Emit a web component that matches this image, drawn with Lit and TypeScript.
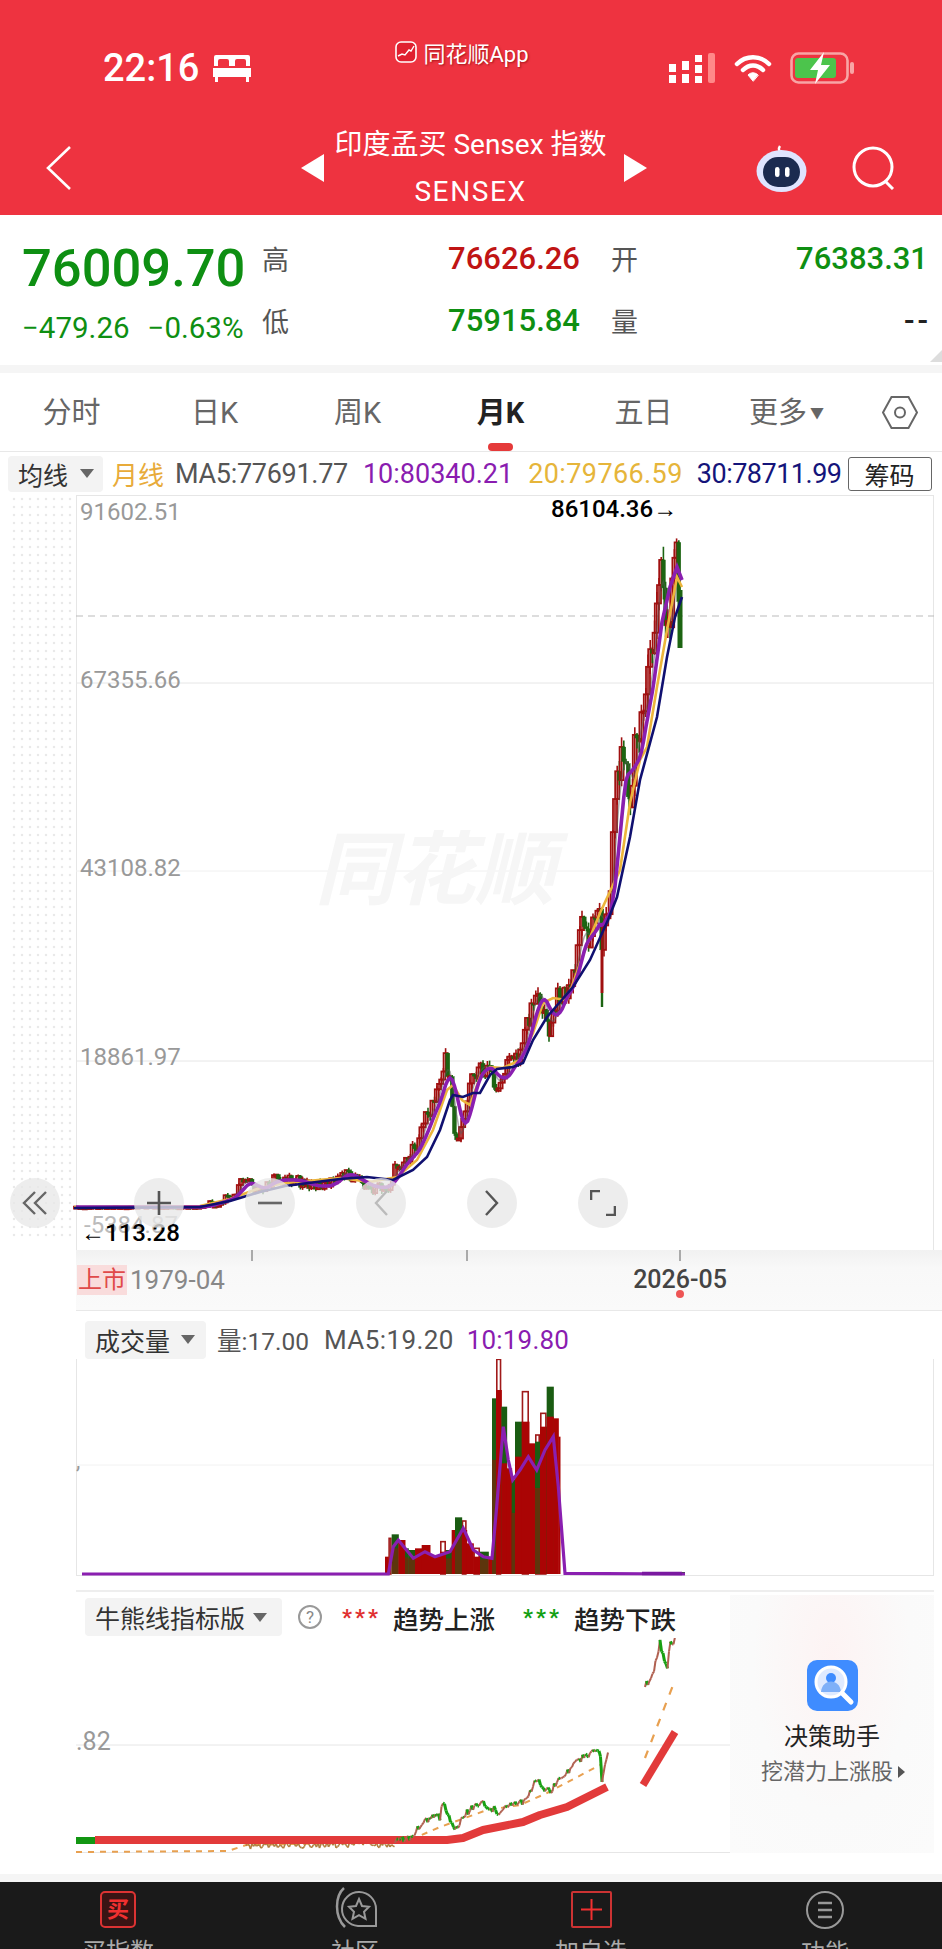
import { LitElement, html, css, svg } from "lit";
import { customElement } from "lit/decorators.js";

type P = [number, number];

function interp(pts: P[], x: number): number {
  if (x <= pts[0][0]) return pts[0][1];
  for (let i = 1; i < pts.length; i++) {
    if (x <= pts[i][0]) {
      const [x0, y0] = pts[i - 1];
      const [x1, y1] = pts[i];
      return y0 + ((y1 - y0) * (x - x0)) / (x1 - x0);
    }
  }
  return pts[pts.length - 1][1];
}

function rng(seed: number) {
  let s = seed;
  return () => {
    s = (s * 16807) % 2147483647;
    return s / 2147483647;
  };
}

const toPath = (pts: P[]) => pts.map((p, i) => `${i ? "L" : "M"}${p[0].toFixed(1)} ${p[1].toFixed(1)}`).join("");

const PRICE: P[] = [
  [74, 1207], [200, 1207], [215, 1203], [232, 1197], [240, 1184], [246, 1180], [256, 1191], [263, 1186], [273, 1180],
  [295, 1180], [310, 1186], [328, 1186], [343, 1172], [363, 1184], [373, 1188], [388, 1186], [395, 1170], [417, 1146],
  [423, 1125], [433, 1105], [440, 1085], [445, 1058], [450, 1085], [455, 1135], [460, 1138], [465, 1105], [470, 1085],
  [480, 1065], [490, 1070], [497, 1085], [510, 1064], [520, 1052], [527, 1028], [533, 996], [540, 994], [550, 1030],
  [557, 1000], [570, 985], [583, 925], [590, 945], [600, 895], [602, 945], [606, 915], [610, 900], [613, 820], [623, 745],
  [630, 795], [637, 730], [647, 695], [653, 640], [660, 552], [667, 650], [672, 590], [676, 548], [680, 625],
];
const NAVY: P[] = [
  [74, 1208], [200, 1207], [230, 1201], [260, 1192], [285, 1186], [340, 1179], [367, 1177], [393, 1180], [413, 1170],
  [427, 1157], [440, 1130], [450, 1100], [453, 1095], [463, 1097], [473, 1093], [480, 1093], [490, 1075], [497, 1069],
  [513, 1067], [523, 1063], [533, 1040], [547, 1017], [560, 1002], [573, 987], [590, 960], [608, 920], [617, 897],
  [630, 837], [640, 780], [657, 717], [667, 657], [675, 617], [682, 597],
];
const ORANGE: P[] = [
  [74, 1207], [200, 1206], [230, 1199], [260, 1188], [285, 1183], [340, 1178], [370, 1182], [397, 1177], [417, 1160],
  [433, 1130], [447, 1090], [453, 1085], [462, 1100], [470, 1105], [480, 1077], [490, 1067], [503, 1068], [520, 1060],
  [533, 1033], [543, 1003], [553, 998], [567, 1000], [585, 950], [600, 913], [620, 870], [630, 803], [640, 760], [647, 747],
  [657, 687], [667, 630], [677, 577], [682, 587],
];

const STEP = 2.2;
const xs: number[] = [];
for (let x = 76; x <= 681; x += STEP) xs.push(x);

function candles() {
  const r = rng(4242);
  const out: { x: number; o: number; c: number; h: number; l: number; up: boolean }[] = [];
  let prev = interp(PRICE, 74);
  for (const x of xs) {
    const base = interp(PRICE, x);
    const amp = x < 210 ? 0.4 : Math.min(22, 4.5 + (1210 - base) * 0.034);
    const c = base + (r() - 0.5) * amp * 2;
    const o = prev;
    out.push({ x, o, c, h: Math.min(o, c) - r() * amp * 0.6, l: Math.max(o, c) + r() * amp * 0.6, up: c < o });
    prev = c;
  }
  return out;
}

function movingAvg(win: number): P[] {
  const ys = xs.map((x) => interp(PRICE, x));
  return xs.map((x, i) => {
    const from = Math.max(0, i - win + 1);
    const seg = ys.slice(from, i + 1);
    return [x, seg.reduce((a, b) => a + b, 0) / seg.length] as P;
  });
}

const VOL: [number, number, number, string, boolean][] = [
  [145, 155, 715, "r", true], [300, 318, 725, "r", true], [365, 380, 663, "r", true], [400, 420, 745, "r", true],
  [468, 484, 178, "r", true], [545, 567, 275, "r", true], [585, 600, 405, "r", true], [600, 620, 340, "r", true],
  [135, 145, 770, "r", false], [155, 175, 703, "g", false], [175, 195, 720, "r", false],
  [195, 205, 745, "g", false], [205, 225, 750, "g", false], [225, 245, 745, "r", false], [245, 270, 735, "r", false],
  [270, 300, 765, "r", false], [300, 318, 755, "r", false], [318, 335, 750, "g", false], [335, 345, 690, "r", false],
  [345, 365, 652, "g", false], [365, 380, 690, "r", false], [380, 400, 730, "r", false], [400, 420, 770, "r", false],
  [420, 445, 755, "g", false], [445, 456, 770, "r", false], [456, 468, 295, "g", false],
  [468, 484, 270, "r", false], [484, 500, 320, "g", false], [484, 500, 490, "r", false], [500, 515, 505, "r", false],
  [515, 525, 540, "g", false], [525, 545, 365, "g", false], [525, 545, 470, "r", false],
  [545, 567, 365, "r", false], [567, 585, 430, "r", false], [585, 600, 425, "g", false],
  [600, 620, 380, "r", false], [620, 640, 260, "g", false], [620, 640, 350, "r", false],
  [640, 655, 355, "r", false], [655, 660, 410, "r", false],
];
const VOL_LINE: P[] = [
  [-774, 822], [145, 822], [160, 740], [175, 720], [195, 745], [220, 775], [255, 755], [285, 770], [330, 755], [370, 685],
  [400, 750], [430, 770], [456, 775], [470, 620], [490, 380], [505, 480], [518, 540], [540, 510], [565, 470], [590, 510],
  [615, 450], [640, 410], [655, 560], [675, 820], [1035, 822],
];
const vx = (X: number) => 340 + X / 3;
const vy = (Y: number) => 1300 + Y / 3;

const BULL1: P[] = [
  [395, 1843], [410, 1837], [423, 1823], [432, 1817], [440, 1817], [443, 1802], [455, 1832], [467, 1812], [480, 1803],
  [500, 1812], [510, 1803], [522, 1803], [537, 1780], [550, 1793], [557, 1782], [573, 1767], [582, 1758], [600, 1748],
  [602, 1783], [608, 1752],
];
const BULL2: P[] = [[645, 1687], [653, 1673], [660, 1643], [667, 1670], [670, 1645], [676, 1639]];

function jitterSegs(pts: P[], seed: number) {
  const r = rng(seed);
  const segs: { d: string; down: boolean }[] = [];
  let px = pts[0][0], py = pts[0][1];
  for (let x = px + 1.5; x <= pts[pts.length - 1][0]; x += 1.5) {
    const y = interp(pts, x) + (r() - 0.5) * 7;
    segs.push({ d: `M${px.toFixed(1)} ${py.toFixed(1)}L${x.toFixed(1)} ${y.toFixed(1)}`, down: y > py });
    px = x; py = y;
  }
  return segs;
}

@customElement("app-root")
export class AppRoot extends LitElement {
  static styles = css`
    :host {
      display: block; width: 942px; height: 1949px; overflow: hidden; background: #fff;
      font-family: Roboto, "Noto Sans CJK SC", sans-serif; color: #222;
    }
    svg { display: block; }
    .hdr { height: 215px; background: #ee3340; color: #fff; display: flex; flex-direction: column; }
    .status { display: grid; grid-template-columns: 1fr auto 1fr; height: 56px; margin-top: 40px; align-items: center; padding: 0 87px 0 103px; }
    .time { display: flex; align-items: center; gap: 14px; font-size: 38px; font-weight: 500; }
    .apptitle { display: flex; align-items: center; gap: 6px; font-size: 22px; align-self: start; height: 28px; color: #fff; text-shadow: 1px 1px 2px rgba(120,0,0,.6); margin-left: -34px; margin-top: -2px; }
    .sicons { display: flex; justify-content: flex-end; align-items: center; gap: 18px; }
    .nav { display: grid; grid-template-columns: 1fr auto 1fr; margin-top: 25px; height: 94px; align-items: center; padding: 0 46px; }
    .navmid { display: flex; align-items: center; gap: 12px; margin-left: 5px; }
    .tt { text-align: center; font-size: 28px; line-height: 47px; white-space: nowrap; width: 276px; margin: 0 3px 0 -3px; }
    .tt span { letter-spacing: 1.6px; }
    .navr { display: flex; justify-content: flex-end; align-items: center; gap: 45px; }

    .quote { position: relative; height: 150px; box-sizing: border-box; padding: 12px 0 0 22px; display: grid; grid-template-columns: 240px 318px 348px; }
    .pc { display: flex; flex-direction: column; padding-top: 3px; }
    .big { font-size: 52.5px; font-weight: 500; color: #0e8f12; line-height: 76px; }
    .sub { font-size: 29.5px; color: #0e8f12; display: flex; gap: 18px; line-height: 36px; margin-top: 4px; }
    .col { display: grid; grid-template-rows: 62px 62px; }
    .col3 { margin-left: 31px; width: 317px; }
    .qrow { display: flex; justify-content: space-between; align-items: center; }
    .lab { font-size: 27px; color: #555; }
    .val { font-size: 31px; font-weight: 500; }
    .red { color: #c01414; }
    .grn { color: #0e8f12; }
    .dash { color: #222; letter-spacing: 3px; margin-right: -3px; }
    .corner { position: absolute; right: 0; bottom: 3px; width: 0; height: 0; border-left: 12px solid transparent; border-bottom: 12px solid #ddd; }
    .sep { height: 8px; background: #f5f5f5; }

    .tabs { height: 78px; display: grid; grid-template-columns: repeat(6, 143px) 84px; border-bottom: 1px solid #e8e8e8; box-sizing: content-box; }
    .tab { position: relative; display: flex; justify-content: center; padding-top: 22px; height: 56px; font-size: 29px; line-height: 36px; color: #666; }
    .tab.on { color: #222; font-weight: 700; }
    .tab.on::after { content: ""; position: absolute; left: 59px; bottom: 0; width: 25px; height: 8px; border-radius: 4px; background: #e53a3a; }
    .caret { font-size: 14px; margin-left: 3px; color: #666; }
    .hexw { display: flex; align-items: center; justify-content: center; height: 78px; }

    .ma { height: 43px; display: flex; align-items: center; font-size: 27px; padding-left: 8px; white-space: nowrap; }
    .sel { display: flex; align-items: center; background: #f3f3f3; border-radius: 4px; color: #333; font-size: 25px; height: 36px; }
    .sel .tri { width: 0; height: 0; border-left: 7px solid transparent; border-right: 7px solid transparent; border-top: 9px solid #666; }
    .s1 { width: 95px; box-sizing: border-box; padding-left: 10px; gap: 12px; }
    .yl { color: #e8ab3a; margin-left: 9px; font-size: 26px; }
    .gr { color: #555; margin-left: 11px; letter-spacing: -.3px; }
    .pu { color: #8a1cb0; margin-left: 15px; }
    .or { color: #e6b53a; margin-left: 15px; letter-spacing: .4px; }
    .nv { color: #14147a; margin-left: 14px; letter-spacing: -.5px; }
    .chip { margin-left: 6px; width: 84px; height: 34px; box-sizing: border-box; border: 1px solid #666; border-radius: 3px; display: flex; align-items: center; justify-content: center; font-size: 25px; color: #222; }

    .main { position: relative; height: 755px; }
    .dots { position: absolute; left: 10px; top: 0; width: 66px; height: 745px; background-image: radial-gradient(circle, #e9e9e9 1.4px, transparent 1.6px); background-size: 8px 8px; }
    .main > svg { position: absolute; left: 0; top: 0; }
    .ctrls { position: absolute; left: 10px; top: 683px; display: flex; }
    .cb { width: 50px; height: 50px; border-radius: 50%; background: rgba(232,232,232,.78); display: flex; align-items: center; justify-content: center; margin-right: 61px; }
    .cb.first { margin-right: 74px; }

    .axis { position: relative; margin-left: 76px; height: 61px; background: linear-gradient(180deg, #f1f1f1 0%, #f8f8f8 30%, #fafafa 100%); border-bottom: 1px solid #e8e8e8; box-sizing: border-box; }
    .tick { position: absolute; top: 0; width: 2px; height: 11px; background: #aaa; }
    .bdg { position: absolute; left: 1px; top: 15px; width: 50px; height: 30px; background: #f9dcdc; color: #e04a4a; font-size: 24px; line-height: 30px; text-align: center; }
    .d1 { position: absolute; left: 54px; top: 13px; font-size: 26px; line-height: 34px; color: #888; }
    .d2 { position: absolute; left: 557px; top: 13px; width: 94px; text-align: center; font-size: 25px; line-height: 34px; color: #444; font-weight: 500; }
    .dot { position: absolute; left: 600px; top: 40px; width: 8px; height: 8px; border-radius: 50%; background: #e55; }

    .vol { position: relative; height: 279px; }
    .vh { display: flex; align-items: center; height: 48px; padding-left: 85px; font-size: 24.5px; box-sizing: border-box; padding-top: 9px; white-space: nowrap; }
    .s2 { width: 121px; box-sizing: border-box; padding-left: 10px; gap: 11px; height: 38px; font-size: 25px; }
    .vh .a { color: #555; margin-left: 11px; }
    .vh .b { color: #555; margin-left: 15px; font-size: 26px; letter-spacing: .4px; }
    .vh .c { color: #8a1cb0; margin-left: 13px; font-size: 26px; letter-spacing: .2px; }

    .bull { margin-left: 76px; width: 858px; height: 264px; box-sizing: border-box; border-top: 2px solid #eee; display: flex; }
    .bl { width: 654px; }
    .bh { height: 46px; display: flex; align-items: center; padding: 4px 0 0 9px; box-sizing: border-box; white-space: nowrap; }
    .s3 { width: 197px; box-sizing: border-box; padding-left: 10px; gap: 8px; height: 38px; font-size: 25px; }
    .q { width: 24px; height: 24px; box-sizing: border-box; border: 2px solid #999; border-radius: 50%; font-size: 17px; line-height: 20px; text-align: center; color: #888; margin-left: 16px; }
    .st { font-size: 22px; font-weight: 700; letter-spacing: 3px; margin-left: 20px; }
    .st.r { color: #e03030; }
    .st.g { color: #12a012; margin-left: 28px; }
    .sl { font-size: 25.5px; font-weight: 500; color: #222; margin-left: 12px; }
    .ad { width: 204px; height: 258px; margin-top: 3px; background: radial-gradient(ellipse at 50% 25%, #fdf3f3 0%, #fafafa 55%, #fbfbfb 100%); display: flex; flex-direction: column; align-items: center; padding-top: 65px; box-sizing: border-box; }
    .adt { font-size: 24px; color: #222; margin-top: 8px; line-height: 36px; }
    .ads { font-size: 22px; color: #666; line-height: 30px; display: flex; align-items: center; gap: 5px; margin-top: 2px; margin-left: 2px; }
    .adtri { width: 0; height: 0; border-top: 6px solid transparent; border-bottom: 6px solid transparent; border-left: 7px solid #555; }
    .footg { height: 8px; background: #f5f5f5; margin-top: 20px; }
    .bar { height: 68px; background: #1a1a1a; position: relative; overflow: hidden; display: grid; grid-template-columns: 236px 238px 234px 234px; }
    .it { display: flex; flex-direction: column; align-items: center; padding-top: 9px; color: #aaa; font-size: 24px; line-height: 30px; white-space: nowrap; }
    .it svg { margin-bottom: 9px; }
    .com { margin-top: -5px; }
  `;

  private mainChart() {
    const cs = candles();
    const cRects = cs.map((c) => {
      const top = Math.min(c.o, c.c);
      const h = Math.max(2, Math.abs(c.o - c.c));
      const col = c.up ? "#a01010" : "#1c6412";
      return svg`<line x1=${c.x} x2=${c.x} y1=${c.h} y2=${c.l} stroke=${col} stroke-width="1.6"/>
        <rect x=${c.x - 2} y=${top} width="4" height=${h} fill=${c.up ? "none" : col} stroke=${col} stroke-width=${c.up ? 1.8 : 0.4}/>`;
    });
    const ma5 = toPath(movingAvg(4));
    const purple = [...movingAvg(7).filter((p) => p[0] < 655), [662, 622], [670, 587], [677, 567], [682, 580]] as P[];
    const hl = "#e6e6e6";
    return html`<svg width="942" height="755" viewBox="0 495 942 755">
      <line x1="76" x2="934" y1="495.500" y2="495.500" stroke=${hl}/>
      <line x1="76.500" x2="76.500" y1="495" y2="1250" stroke=${hl}/>
      <line x1="933.500" x2="933.500" y1="495" y2="1250" stroke=${hl}/>
      <line x1="76" x2="934" y1="616" y2="616" stroke="#bbb" stroke-width="1" stroke-dasharray="7 5"/>
      <line x1="76" x2="934" y1="683" y2="683" stroke=${hl}/>
      <line x1="76" x2="934" y1="871" y2="871" stroke="#f0f0f0"/>
      <line x1="76" x2="934" y1="1061" y2="1061" stroke=${hl}/>
      <text x="435" y="898" text-anchor="middle" font-size="80" font-weight="700" font-style="italic" fill="#f6f6f6" font-family="Noto Sans CJK SC, sans-serif">同花顺</text>
      <g font-family="Roboto, sans-serif" font-size="24" fill="#999">
        <text x="80" y="520">91602.51</text>
        <text x="80" y="688">67355.66</text>
        <text x="80" y="876">43108.82</text>
        <text x="80" y="1065">18861.97</text>
        <text x="84" y="1233" fill="#bbb">-5384.87</text>
      </g>
      ${cRects}
      <path d="M602 950V993" stroke="#a01010" stroke-width="3"/>
      <path d="M602 993V1007" stroke="#1c6412" stroke-width="2.400"/>
      <path d="M680 590V648" stroke="#1c6412" stroke-width="5"/>
      <path d=${ma5} fill="none" stroke="#555" stroke-width="1.500" opacity=".5"/>
      <path d=${toPath(ORANGE)} fill="none" stroke="#ecb53c" stroke-width="2.600"/>
      <path d=${toPath(purple)} fill="none" stroke="#8a1fb0" stroke-width="3.600"/>
      <path d=${toPath(NAVY)} fill="none" stroke="#101070" stroke-width="2.600"/>
      <g font-family="Roboto, sans-serif" font-size="24" fill="#000" font-weight="500">
        <text x="551" y="517">86104.36→</text>
        <text x="81" y="1241">←113.28</text>
      </g>
    </svg>`;
  }

  private volChart() {
    const bars = VOL.map(([a, b, t, col, hollow]) => {
      const c = col === "r" ? "#aa0404" : "#1a5c12";
      const x = vx(a), w = (b - a) / 3, y = vy(t), h = 1574 - y;
      if (hollow) return svg`<rect x=${x + 0.8} y=${y} width=${w - 1.6} height=${h} fill="none" stroke="#a01a1a" stroke-width="1.600"/>`;
      const blend = col === "g" ? svg`<rect x=${x} y=${y + h * 0.35} width=${w} height=${h * 0.65} fill="#8a1a08" fill-opacity=".6"/>` : "";
      return svg`<rect x=${x} y=${y} width=${w + 0.5} height=${h} fill=${c}/>${blend}`;
    });
    const line = VOL_LINE.map(([x, y]) => [vx(x), vy(y)] as P);
    return html`<svg width="942" height="231" viewBox="0 1359 942 231">
      <line x1="76" x2="934" y1="1465" y2="1465" stroke="#f2f2f2"/>
      <line x1="76" x2="934" y1="1575.500" y2="1575.500" stroke="#e6e6e6"/>
      <line x1="76.500" x2="76.500" y1="1359" y2="1575" stroke="#e6e6e6"/>
      <line x1="933.500" x2="933.500" y1="1359" y2="1575" stroke="#e6e6e6"/>
      <text x="76" y="1468" font-size="22" fill="#999" font-family="Roboto, sans-serif">,</text>
      <rect x="645" y="1572" width="40" height="3" fill="#1c6414"/>
      ${bars}
      <path d=${toPath(line)} fill="none" stroke="#8a1fb0" stroke-width="3.200"/>
      <line x1="642" x2="682" y1="1573.500" y2="1573.500" stroke="#7a18a0" stroke-width="3.400"/>
    </svg>`;
  }

  private bullChart() {
    const seg1 = jitterSegs(BULL1, 77);
    const seg2 = jitterSegs(BULL2, 91);
    const early = jitterSegs([[246, 1846], [300, 1845], [350, 1844], [395, 1844]], 33);
    const lineEls = [...seg1, ...seg2].map(
      (s) => svg`<path d=${s.d} fill="none" stroke=${s.down ? "#18a012" : "#b06050"} stroke-width=${s.down ? 3 : 2}/>`,
    );
    const dash1: P[] = [[76, 1852], [228, 1851], [246, 1845], [390, 1842], [410, 1840], [440, 1827], [487, 1810], [520, 1805], [547, 1793], [600, 1765]];
    const dash2: P[] = [[645, 1758], [675, 1680]];
    const red1: P[] = [[95, 1840], [447, 1840], [463, 1838], [483, 1830], [523, 1822], [540, 1815], [567, 1807], [607, 1787]];
    const red2: P[] = [[643, 1785], [675, 1732]];
    return html`<svg width="654" height="215" viewBox="76 1638 654 215">
      <line x1="76" x2="730" y1="1745" y2="1745" stroke="#e6e6e6"/>
      <line x1="76" x2="730" y1="1852.500" y2="1852.500" stroke="#e6e6e6"/>
      <text x="76" y="1750" font-size="25" fill="#999" font-family="Roboto, sans-serif">.82</text>
      <rect x="76" y="1837" width="20" height="7" fill="#129612"/>
      <path d=${toPath(dash1)} fill="none" stroke="#e8a050" stroke-width="2" stroke-dasharray="6 6"/>
      <path d=${toPath(dash2)} fill="none" stroke="#e8a050" stroke-width="2.200" stroke-dasharray="8 9"/>
      ${early.map((s) => svg`<path d=${s.d} fill="none" stroke="#b08040" stroke-width="1.600"/>`)}
      <path d=${toPath(red1)} fill="none" stroke="#e23a3a" stroke-width="8" stroke-linejoin="round"/>
      <path d=${toPath(red2)} fill="none" stroke="#e23a3a" stroke-width="7.500"/>
      ${lineEls}
    </svg>`;
  }

  render() {
    const W = "#fff";
    return html`
      <div class="hdr">
        <div class="status">
          <div class="time">22:16
            <svg width="38" height="27" viewBox="0 0 38 27" fill=${W}>
              <path d="M3 0h32a2 2 0 0 1 2 2v9h-4V6a2 2 0 0 0-2-2h-7a2 2 0 0 0-2 2v5h-6V6a2 2 0 0 0-2-2H7a2 2 0 0 0-2 2v5H1V2a2 2 0 0 1 2-2z"/>
              <path d="M0 13h38v9H36v5h-3v-5H5v5H2v-5H0z"/>
            </svg>
          </div>
          <div class="apptitle">
            <svg width="22" height="22" viewBox="0 0 22 22"><rect x="1" y="1" width="20" height="20" rx="5" fill="#e02030" stroke="#fff" stroke-width="1.600"/><path d="M3 15l4-2 3 1 4-5 2 1 3-5" fill="none" stroke="#fff" stroke-width="1.400"/></svg>
            同花顺App
          </div>
          <div class="sicons">
            <svg width="47" height="30" viewBox="0 0 47 30" fill=${W}>
              <rect x="0" y="11" width="7" height="8"/><rect x="0" y="22" width="7" height="8"/>
              <rect x="13" y="8" width="7" height="9"/><rect x="13" y="21" width="7" height="9"/>
              <rect x="26" y="2" width="7" height="7"/><rect x="26" y="12" width="7" height="8"/><rect x="26" y="23" width="7" height="7"/>
              <rect x="39" y="0" width="7" height="30" rx="2" fill="#f88"/>
            </svg>
            <svg width="38" height="30" viewBox="0 0 38 30" fill="none" stroke=${W} stroke-width="4.500" stroke-linecap="round">
              <path d="M3 11c9-9 23-9 32 0"/><path d="M9 17c6-6 14-6 20 0"/><path d="M19 28l-5-6c3-3 7-3 10 0z" fill=${W} stroke-width="1"/>
            </svg>
            <svg width="65" height="32" viewBox="0 0 65 32">
              <rect x="1.500" y="1.500" width="56" height="29" rx="7" fill="none" stroke="#f8a5a5" stroke-width="2.600"/>
              <rect x="60" y="10" width="4" height="12" rx="2" fill="#f8a5a5"/>
              <rect x="5" y="6" width="41" height="20" rx="3" fill="#4cc44c"/>
              <path d="M34 0L20 18h8l-3 14 15-19h-9z" fill=${W}/>
            </svg>
          </div>
        </div>
        <div class="nav">
          <svg width="26" height="44" viewBox="0 0 26 44" fill="none" stroke=${W} stroke-width="2.600"><path d="M24 1L2 22l22 21"/></svg>
          <div class="navmid">
            <svg width="23" height="28" viewBox="0 0 23 28" fill=${W}><path d="M23 0v28L0 14z"/></svg>
            <div class="tt">印度孟买 Sensex 指数<br /><span>SENSEX</span></div>
            <svg width="23" height="28" viewBox="0 0 23 28" fill=${W}><path d="M0 0v28l23-14z"/></svg>
          </div>
          <div class="navr">
            <svg width="51" height="50" viewBox="0 0 51 50">
              <path d="M25 9c-2-1-3-3-1-6" fill="none" stroke=${W} stroke-width="2.400"/>
              <ellipse cx="25.500" cy="28" rx="25" ry="21" fill="#dfe4ff"/>
              <rect x="7" y="14" width="37" height="30" rx="15" fill="#1b2a50"/>
              <rect x="19" y="24" width="4.500" height="10" rx="2.200" fill=${W}/><rect x="29" y="24" width="4.500" height="10" rx="2.200" fill=${W}/>
            </svg>
            <svg width="44" height="44" viewBox="0 0 44 44" fill="none" stroke=${W} stroke-width="3"><circle cx="21" cy="21" r="19"/><path d="M33 35l8 8"/></svg>
          </div>
        </div>
      </div>

      <div class="quote">
        <div class="pc">
          <div class="big">76009.70</div>
          <div class="sub"><span>−479.26</span><span>−0.63%</span></div>
        </div>
        <div class="col">
          <div class="qrow"><span class="lab">高</span><span class="val red">76626.26</span></div>
          <div class="qrow"><span class="lab">低</span><span class="val grn">75915.84</span></div>
        </div>
        <div class="col col3">
          <div class="qrow"><span class="lab">开</span><span class="val grn">76383.31</span></div>
          <div class="qrow"><span class="lab">量</span><span class="val dash">--</span></div>
        </div>
        <div class="corner"></div>
      </div>
      <div class="sep"></div>

      <div class="tabs">
        <div class="tab">分时</div>
        <div class="tab">日K</div>
        <div class="tab">周K</div>
        <div class="tab on">月K</div>
        <div class="tab">五日</div>
        <div class="tab">更多<span class="caret">▼</span></div>
        <div class="hexw">
          <svg width="36" height="33" viewBox="0 0 36 33" fill="none" stroke="#666" stroke-width="2"><path d="M1 16.500L9.500 1h17L35 16.500 26.500 32h-17z"/><circle cx="18" cy="16.500" r="5"/></svg>
        </div>
      </div>

      <div class="ma">
        <div class="sel s1">均线<span class="tri"></span></div>
        <span class="yl">月线</span>
        <span class="gr">MA5:77691.77</span>
        <span class="pu">10:80340.21</span>
        <span class="or">20:79766.59</span>
        <span class="nv">30:78711.99</span>
        <div class="chip">筹码</div>
      </div>

      <div class="main">
        <div class="dots"></div>
        ${this.mainChart()}
        <div class="ctrls">
          <div class="cb first"><svg width="26" height="26" viewBox="0 0 26 26" fill="none" stroke="#666" stroke-width="2.400"><path d="M13 2L2 13l11 11M24 2L13 13l11 11"/></svg></div>
          <div class="cb"><svg width="24" height="24" viewBox="0 0 24 24" fill="none" stroke="#555" stroke-width="2.600"><path d="M12 0v24M0 12h24"/></svg></div>
          <div class="cb"><svg width="24" height="4" viewBox="0 0 24 4" fill="none" stroke="#666" stroke-width="2.600"><path d="M0 2h24"/></svg></div>
          <div class="cb"><svg width="14" height="26" viewBox="0 0 14 26" fill="none" stroke="#bbb" stroke-width="2.400"><path d="M13 1L2 13l11 12"/></svg></div>
          <div class="cb"><svg width="14" height="26" viewBox="0 0 14 26" fill="none" stroke="#555" stroke-width="2.400"><path d="M1 1l11 12L1 25"/></svg></div>
          <div class="cb"><svg width="26" height="26" viewBox="0 0 26 26" fill="none" stroke="#555" stroke-width="2.600"><path d="M1 10V1h9M25 16v9h-9"/></svg></div>
        </div>
      </div>

      <div class="axis">
        <div class="tick" style="left:175px"></div>
        <div class="tick" style="left:390px"></div>
        <div class="tick" style="left:603px"></div>
        <div class="bdg">上市</div>
        <div class="d1">1979-04</div>
        <div class="d2">2026-05</div>
        <div class="dot"></div>
      </div>

      <div class="vol">
        <div class="vh">
          <div class="sel s2">成交量<span class="tri"></span></div>
          <span class="a">量:17.00</span>
          <span class="b">MA5:19.20</span>
          <span class="c">10:19.80</span>
        </div>
        ${this.volChart()}
      </div>

      <div class="bull">
        <div class="bl">
          <div class="bh">
            <div class="sel s3">牛熊线指标版<span class="tri"></span></div>
            <div class="q">?</div>
            <span class="st r">***</span><span class="sl">趋势上涨</span>
            <span class="st g">***</span><span class="sl">趋势下跌</span>
          </div>
          ${this.bullChart()}
        </div>
        <div class="ad">
          <svg width="51" height="51" viewBox="0 0 51 51">
            <rect width="51" height="51" rx="10" fill="#3f8cff"/>
            <circle cx="24" cy="22" r="15" fill="#dfeaff" stroke="#fff" stroke-width="3"/>
            <circle cx="24" cy="18" r="5" fill="#3f8cff"/><path d="M14 32c1-14 19-14 20 0z" fill="#7fb0f8"/>
            <path d="M35 33l9 9" stroke="#fff" stroke-width="5" stroke-linecap="round"/>
          </svg>
          <div class="adt">决策助手</div>
          <div class="ads">挖潜力上涨股<span class="adtri"></span></div>
        </div>
      </div>
      <div class="footg"></div>

      <div class="bar">
        <div class="it">
          <svg width="36" height="37" viewBox="0 0 36 37"><rect x="1" y="1" width="34" height="35" rx="4" fill="#3a1414" stroke="#d33" stroke-width="2"/><text x="18" y="26" text-anchor="middle" font-size="22" font-weight="700" fill="#f03030" font-family="Noto Sans CJK SC, sans-serif">买</text></svg>
          买指数
        </div>
        <div class="it">
          <svg class="com" width="44" height="42" viewBox="0 0 44 42" fill="none" stroke="#999" stroke-width="2"><path d="M11 2C2 10 1 30 12 41" stroke-width="2.500"/><path d="M43 40H25a17 17 0 1 1 18-17z"/><path d="M26 13l3 7 7 .8-5 5 1.500 7-6.500-3.600-6.500 3.600 1.500-7-5-5 7-.8z"/></svg>
          社区
        </div>
        <div class="it">
          <svg width="41" height="37" viewBox="0 0 41 37"><rect x="1" y="1" width="39" height="35" rx="1" fill="none" stroke="#c33" stroke-width="2"/><path d="M20.500 8v21M10 18.500h21" stroke="#f03030" stroke-width="2"/></svg>
          加自选
        </div>
        <div class="it">
          <svg width="38" height="38" viewBox="0 0 38 38" fill="none" stroke="#999" stroke-width="2"><circle cx="19" cy="19" r="18"/><path d="M12 12h14M12 19h14M12 26h14" stroke-width="2.400"/></svg>
          功能
        </div>
      </div>
    `;
  }
}
